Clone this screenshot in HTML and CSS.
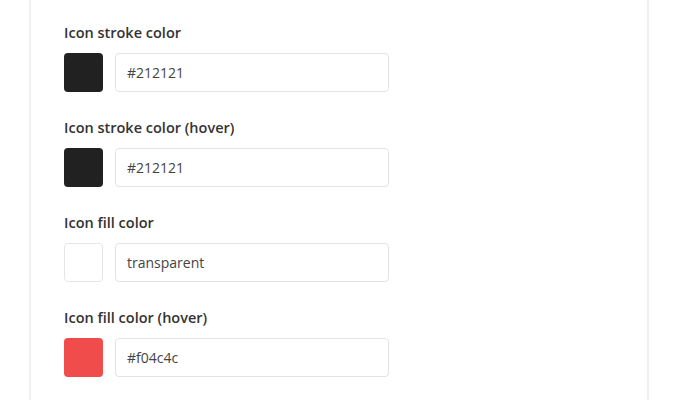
FILE: index.html
```html
<!DOCTYPE html>
<html>
<head>
<meta charset="utf-8">
<link rel="stylesheet" href="styles.css">
</head>
<body>
<div class="panel">
  <div class="field">
    <div class="label">Icon stroke color</div>
    <div class="row"><span class="swatch dark"></span><input class="text" value="#212121"></div>
  </div>
  <div class="field">
    <div class="label">Icon stroke color (hover)</div>
    <div class="row"><span class="swatch dark"></span><input class="text" value="#212121"></div>
  </div>
  <div class="field">
    <div class="label">Icon fill color</div>
    <div class="row"><span class="swatch light"></span><input class="text" value="transparent"></div>
  </div>
  <div class="field last">
    <div class="label">Icon fill color (hover)</div>
    <div class="row"><span class="swatch red"></span><input class="text" value="#f04c4c"></div>
  </div>
</div>
</body>
</html>
```
FILE: styles.css
```css
html, body {
  margin: 0;
  background: #fff;
  font-family: "Open Sans", "Segoe UI", sans-serif;
}
.panel {
  margin-left: 29px;
  width: 620px;
  height: 400px;
  box-sizing: border-box;
  border-left: 2px solid #efefef;
  border-right: 2px solid #efefef;
  padding: 23px 0 0 33px;
}
.field {
  margin-bottom: 26px;
}
.field.last {
  margin-top: 1px;
}
.label {
  font-size: 14.5px;
  font-weight: 600;
  line-height: 20px;
  color: #333;
  margin-bottom: 10px;
}
.row {
  display: flex;
  gap: 12px;
  height: 39px;
}
.swatch {
  width: 39px;
  height: 39px;
  box-sizing: border-box;
  border-radius: 4px;
}
.dark { background: #212121; }
.light { background: #fff; border: 1px solid #e6e6e6; }
.red { background: #f04c4c; }
.text {
  width: 274px;
  height: 39px;
  box-sizing: border-box;
  border: 1px solid #e3e3e3;
  border-radius: 4px;
  padding: 0 11px;
  font-family: "Open Sans", "Segoe UI", sans-serif;
  font-size: 14px;
  color: #444;
  outline: none;
}
```
